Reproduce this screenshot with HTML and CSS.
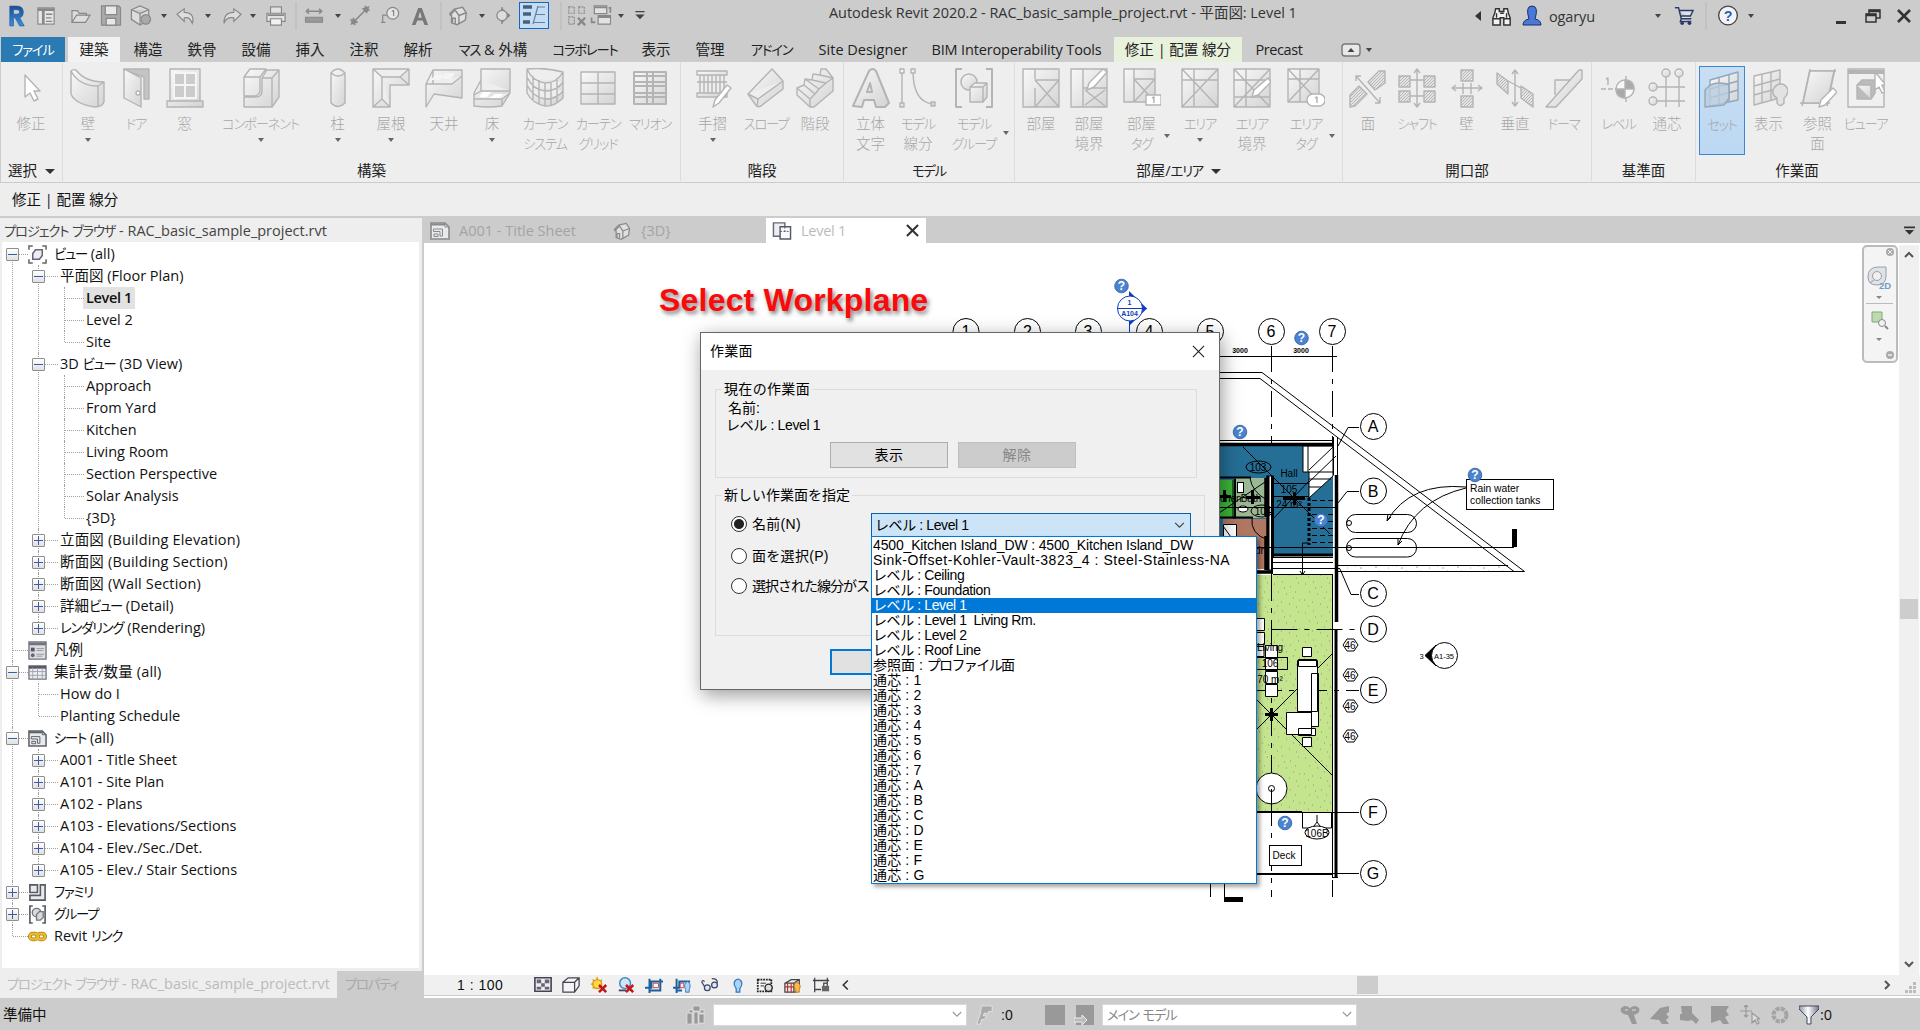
FILE: index.html
```
<!DOCTYPE html>
<html lang="ja">
<head>
<meta charset="utf-8">
<title>Autodesk Revit 2020.2 - RAC_basic_sample_project.rvt</title>
<link rel="stylesheet" href="styles.css">
</head>
<body>
<svg class="defs" aria-hidden="true">
  <defs>
    <linearGradient id="lg" x1="0" y1="0" x2="1" y2="1"><stop offset="0" stop-color="#f8f8f8"/><stop offset="1" stop-color="#d4d4d4"/></linearGradient>
    <linearGradient id="rb" x1="0" y1="0" x2="0" y2="1"><stop offset="0" stop-color="#1b4e8f"/><stop offset="1" stop-color="#3c8fe0"/></linearGradient>
    <linearGradient id="fn" x1="0" y1="0" x2="1" y2="0"><stop offset="0" stop-color="#8a93a5"/><stop offset=".45" stop-color="#fff"/><stop offset="1" stop-color="#6b7488"/></linearGradient>
    <pattern id="grass" width="31" height="29" patternUnits="userSpaceOnUse"><rect width="31" height="29" fill="#c5e48e"/><path d="M3 4h1M11 2h1M19 7h1M27 3h1M7 12h1M15 14h1M24 12h1M2 20h1M10 22h1M18 24h1M28 20h1M22 18h1M13 8h1M6 26h1M25 27h1" stroke="#8a9a80"/></pattern>
    <pattern id="gravel" width="41" height="6" patternUnits="userSpaceOnUse"><path d="M2 2h1M7 4h2M12 1h1M22 3h2M26 1h1M35 4h1" stroke="#aaa"/></pattern>
    <pattern id="hatch" width="3" height="3" patternUnits="userSpaceOnUse"><rect width="3" height="3" fill="#e4e4e4"/><path d="M0 3L3 0" stroke="#aaa" stroke-width=".8"/></pattern>
    <symbol id="help" viewBox="-8 -8 16 16"><circle r="6.8" fill="#4a83cf" stroke="#2c5c9e" stroke-width=".8"/><text y="4.4" text-anchor="middle" font-family="Liberation Sans" font-weight="bold" font-size="12" fill="#fff">?</text></symbol>
    <symbol id="house" viewBox="0 0 24 24"><path d="M3 10l5-5 9-2 4 6-1 8-9 5-6-2V12z" fill="#e0e0e0" stroke="currentColor" stroke-width="1.5"/><path d="M3 12l6-6 4 6v9M13 12l8-3M6 20v-5h3v6" fill="none" stroke="currentColor" stroke-width="1.5"/></symbol>
    <symbol id="sheet" viewBox="0 0 20 18"><path d="M1 1h14l4 4v12H1z" fill="#e8eaee" stroke="currentColor" stroke-width="1.6"/><path d="M1 2.5h14" stroke="currentColor" stroke-width="2"/><path d="M3.500 7h9v7h-2.500V9.500h-6.500zM4 12h4v2.500H4z" fill="none" stroke="currentColor"/><path d="M15 1v4h4" fill="none" stroke="currentColor"/></symbol>
  </defs>
</svg>
<div class="app">

<header class="titlebar">
  <div class="qat">
    <svg viewBox="0 0 20 26" width="18" height="24"><path d="M2 2h8q7 0 7 7 0 5-4 6l5 9h-5l-5-9H6v9H2zM6 6v5h4q3 0 3-2.500T10 6z" fill="url(#rb)" stroke="#1d5fa8" stroke-width=".8"/></svg>
    <svg viewBox="0 0 20 20" width="18" height="18" class="g"><rect x="1" y="1" width="18" height="18" fill="#e6e6e6"/><path d="M1 3h18M7 4v15" stroke-width="3"/><path d="M10 8h7M10 12h6M10 16h7" stroke-width="1.500"/></svg>
    <svg viewBox="0 0 24 20" width="22" height="18" class="g"><path d="M2 17V4h6l2 3h8v3M2 17l5-8h15l-5 8z" fill="#ddd"/></svg>
    <svg viewBox="0 0 22 22" width="21" height="21" class="g"><path d="M1 1h18l2 2v18H1z" fill="#aaa"/><path d="M5 1h12v9H5zM6 14h10v7H6z" fill="#e8e8e8"/></svg>
    <svg viewBox="0 0 24 24" width="23" height="23" class="g"><path d="M2 6l9-4 9 4v10l-9 6-9-6zM2 6l9 4 9-4M11 10v12" fill="#ddd"/><circle cx="17" cy="16" r="5" fill="#aaa"/></svg>
    <i class="dd"></i>
    <svg viewBox="0 0 22 20" width="21" height="18" class="g"><path d="M1 8l8-6v4c9 0 11 6 9 12-2-5-4-7-9-6v4z" fill="#ddd"/></svg>
    <i class="dd"></i>
    <svg viewBox="0 0 22 20" width="21" height="18" class="g"><path d="M21 8l-8-6v4c-9 0-11 6-11 12 2-5 5-7 11-6v4z" fill="#ddd"/></svg>
    <i class="dd"></i>
    <svg viewBox="0 0 22 22" width="21" height="20" class="g"><path d="M5 8V1h12v7M1 8h20v9H1z" fill="#e2e2e2"/><path d="M5 14h12v7H5z" fill="#f2f2f2"/><path d="M2 10h18" stroke-width="2"/></svg>
    <i class="vl"></i>
    <svg viewBox="0 0 22 20" width="21" height="17" class="g"><path d="M2 5h18M5 2L2 5l3 3M17 2l3 3-3 3" stroke-width="1.800"/><path d="M1 12h20v6H1z" fill="#999"/></svg>
    <i class="dd"></i>
    <svg viewBox="0 0 22 22" width="21" height="21" class="g"><path d="M5 17L17 5" stroke-width="1.600"/><path d="M2 20l2-6 4 4zM20 2l-6 2 4 4z" fill="#888"/><path d="M1 15l5 6M16 1l5 5" stroke-width="1.600"/></svg>
    <svg viewBox="0 0 22 22" width="20" height="20" class="g"><circle cx="14" cy="8" r="6.500" fill="#e6e6e6"/><path d="M7.500 10H3v8M1 18h5M13 6l2-1v6"/></svg>
    <svg viewBox="0 0 20 22" width="18" height="20"><path d="M8 2h4l7 19h-4l-2-5H7l-2 5H1zM10 6l-2 7h4z" fill="#777"/></svg>
    <i class="vl"></i>
    <svg width="22" height="23" class="g"><use href="#house"/></svg>
    <i class="dd"></i>
    <svg viewBox="0 0 18 22" width="17" height="21" class="g"><path d="M8 2v18"/><path d="M8 4l8 7-8 7z" fill="#777"/><circle cx="8" cy="11" r="5.500" fill="#ddd"/></svg>
    <div class="thin"><svg viewBox="0 0 22 22" width="22" height="22"><path d="M0 3h9M0 10h8M0 18h7" stroke="#46617e" stroke-width="3.500"/><path d="M10 20L15 2M15 3h7M13 10.500h9M11 18.500h11" stroke="#63809e" stroke-width="1.200" fill="none"/></svg></div>
    <i class="vl"></i>
    <svg viewBox="0 0 22 24" width="20" height="24" class="g"><path d="M2 2h6v7H2zM13 2h6v7h-6zM2 13h6v8H2z" stroke-dasharray="2 1"/><path d="M12 14l8 8M20 14l-8 8" stroke-width="2.500"/></svg>
    <svg viewBox="0 0 22 24" width="21" height="23" class="g"><path d="M4 2h13v8H4zM8 12h13v9H8z" fill="#e2e2e2"/><path d="M4 3.500h13M8 13.500h13M1 14v5h4M21 9V4h-2" stroke-width="2"/></svg>
    <i class="dd"></i>
    <svg viewBox="0 0 12 12" width="11" height="11"><path d="M1 1h10v1.500H1zM1 5h10l-5 5z" fill="#444"/></svg>
  </div>
  <div class="apptitle">Autodesk Revit 2020.2 - RAC_basic_sample_project.rvt - 平面図: Level 1</div>
  <div class="info">
    <svg viewBox="0 0 6 10" width="6" height="10"><path d="M6 0v10L0 5z" fill="#333"/></svg>
    <svg viewBox="0 0 22 22" width="21" height="20"><path d="M4 3h4v3h5V3h4l1 5 2 5v8h-7v-8H9v8H1v-8l2-5z" fill="#f2f2f2" stroke="#333" stroke-width="1.600"/><path d="M1 14h8M13 14h7M9 8h4M5 8v5M16 8v5" stroke="#333" stroke-width="1.500"/></svg>
    <svg viewBox="0 0 20 22" width="21" height="22"><path d="M1 20q0-5 6-6-4-13 3-13t3 13q6 1 6 6z" fill="#4878d8" stroke="#1d2f66"/></svg>
    <span class="user">ogaryu</span>
    <i class="dd"></i>
    <svg viewBox="0 0 22 22" width="20" height="20"><path d="M1 2h4l3 12h11M6 5h15l-3 6H8M8 14l-1 3h12" fill="#dfe3ea" stroke="#2c3a66" stroke-width="1.600"/><circle cx="9" cy="19" r="2" fill="#2c3a66"/><circle cx="17" cy="19" r="2" fill="#2c3a66"/></svg>
    <i class="vl"></i>
    <svg viewBox="0 0 22 22" width="21" height="21"><circle cx="11" cy="11" r="9.800" fill="#f4f4f4" stroke="#444" stroke-width="1.400"/><text x="11" y="16.500" text-anchor="middle" font-family="Liberation Sans" font-size="15" font-weight="bold" fill="#2a62b8">?</text></svg>
    <i class="dd"></i>
    <svg viewBox="0 0 10 16" width="10" height="16"><path d="M0 13h10v3H0z" fill="#333"/></svg>
    <svg viewBox="0 0 16 14" width="16" height="14"><path d="M4 5V1h11v8h-4M1 5h10v8H1z" fill="none" stroke="#333" stroke-width="1.500"/><path d="M1 6h10M4 2h11" stroke="#333" stroke-width="2.500"/></svg>
    <svg viewBox="0 0 14 14" width="14" height="14"><path d="M1 1l12 12M13 1L1 13" stroke="#333" stroke-width="2.600"/></svg>
  </div>
</header>

<nav class="tabs">
  <span class="t-file"><b class="k">ファイル</b></span><span class="t-on">建築</span><span>構造</span><span>鉄骨</span><span>設備</span><span>挿入</span><span>注釈</span><span>解析</span><span class="t-mass"><b class="k">マス</b> &amp; 外構</span><span class="t-col"><b class="k">コラボレート</b></span><span>表示</span><span>管理</span><span class="t-add"><b class="k">アドイン</b></span><span class="t-site">Site Designer</span><span class="t-bim">BIM Interoperability Tools</span><span class="t-mod">修正 | 配置 線分</span><span class="t-pre">Precast</span>
  <svg viewBox="0 0 20 14" width="20" height="14"><rect x="1" y="1" width="18" height="12" rx="3" fill="#e8e8e8" stroke="#777" stroke-width="1.400"/><path d="M6.500 9h7L10 5z" fill="#444"/></svg>
  <i class="dd"></i>
</nav>

<section class="ribbon">
  <div class="panel p-sel">
    <div class="tools">
      <div class="tool"><svg viewBox="0 0 38 40"><path d="M13 7v22l5-4 4 8 4-2-4-8h6z" fill="#fff"/></svg><span>修正</span></div>
    </div>
    <div class="plabel">選択 <i class="pd"></i></div>
  </div>
  <div class="panel p-build">
    <div class="tools">
      <div class="tool"><svg viewBox="0 0 38 40"><path d="M2 3q2-2 5-1 9 12 28 12v20q-2 5-9 5Q6 36 2 26zM2 3q8 15 27 15v20M29 18l6-4"/></svg><span>壁</span><i class="dd"></i></div>
      <div class="tool"><svg viewBox="0 0 38 40"><path d="M7 1h25v30h-5V9L7 2z" fill="#c4c4c4"/><path d="M7 1l17 9v29L7 30z"/><circle cx="21" cy="25" r="2" fill="#fff"/></svg><span><b class="k">ドア</b></span></div>
      <div class="tool"><svg viewBox="0 0 38 40"><path d="M4 1h30v32H4zM1 33h36v6H1z"/><path d="M8 5h22v25H8zM19 5v25M8 17h22" fill="#ccc" stroke="#f5f5f5" stroke-width="2"/></svg><span>窓</span></div>
      <div class="tool"><svg viewBox="0 0 38 40"><path d="M2 9l6-8h16l-6 8v15q-2 4-6 4H2zM2 9h16M20 10l5-8h12v27l-7 10H2V29h12q6 0 6-6zM20 10h10v29M30 10l7-8"/></svg><span><b class="k">コンポーネント</b></span><i class="dd"></i></div>
      <div class="tool"><svg viewBox="0 0 38 40"><path d="M12 5q7-8 14 0v30q-7 7-14 0zM12 5q7 6 14 0"/></svg><span>柱</span><i class="dd"></i></div>
      <div class="tool"><svg viewBox="0 0 38 40"><path d="M1 1h36v16H18v22H1zM1 1l9 8h18l9-8M10 9v22l8 8M10 31l-9 8M28 9l9 8"/></svg><span>屋根</span><i class="dd"></i></div>
      <div class="tool"><svg viewBox="0 0 38 40"><path d="M1 16L8 2h29v28L9 26l-8 13zM1 16h26L37 8M8 2v14"/><path d="M10 7h9l-4 5H6zM21 5h9l-4 6h-9z" fill="#f5f5f5" stroke="none"/></svg><span>天井</span></div>
      <div class="tool"><svg viewBox="0 0 38 40"><path d="M1 25L8 12V1h29v24l-8 13q-13 2-28 0zM8 12v11h29M1 27l7-4M1 31h28l8-6M29 31v7"/><path d="M10 24h8l-4 5H6zM22 26h8l-4 4h-9z" fill="#fff" stroke="none"/></svg><span>床</span><i class="dd"></i></div>
      <div class="tool"><svg viewBox="0 0 38 40"><path d="M1 1q18-2 36 3v26q-9 9-18 8Q7 36 1 25zM1 1q5 12 18 14 12 0 18-11M7 8v25M13 12v25M19 15v23M25 14v23M31 10v24M1 9q6 13 18 14 12 0 18-9M1 17q6 12 18 14 12 0 18-8"/></svg><span><b class="k">カーテン<br>システム</b></span></div>
      <div class="tool"><svg viewBox="0 0 38 40"><path d="M2 4h34v32H2zM19 4v32M2 15h34M2 26h34"/></svg><span><b class="k">カーテン<br>グリッド</b></span></div>
      <div class="tool"><svg viewBox="0 0 38 40"><path d="M3 4h32v32H3zM3 8h32M3 14h32M3 18h32M3 25h32M3 29h32M16 4h6v32h-6z" stroke-width="2"/></svg><span><b class="k">マリオン</b></span></div>
    </div>
    <div class="plabel">構築</div>
  </div>
  <div class="panel p-stair">
    <div class="tools">
      <div class="tool"><svg viewBox="0 0 38 40"><path d="M3 3h30v4H3zM3 14h30M3 25h30v4H3zM6 7v18M10 7v18M14 7v18M18 7v18M22 7v18M26 7v18M30 7v18"/><path d="M19 39l2-7 12-15 4 3-12 15z" fill="#fff"/></svg><span>手摺</span><i class="dd"></i></div>
      <div class="tool"><svg viewBox="0 0 38 40"><path d="M1 26L25 1l11 12v8L14 38q-4 2-6-2zM1 26l10 5 25-18M11 31l-1 8"/></svg><span><b class="k">スロープ</b></span></div>
      <div class="tool"><svg viewBox="0 0 38 40"><path d="M1 20l7-3 1-6 7 1 1-6 7 1 1-6h5l7 9v13L18 39h-4L1 27zM1 20l13 11v8M8 17l11 9-5 5M9 11l14 10-4 5M16 12l14 3-7 6M24 7l13 3-7 5"/></svg><span>階段</span></div>
    </div>
    <div class="plabel">階段</div>
  </div>
  <div class="panel p-model">
    <div class="tools">
      <div class="tool"><svg viewBox="0 0 38 40"><path d="M1 38L17 3q4-4 7 0l13 32-4 4h-9l-2-7H12l-2 7zM15 24h5l-2-9z" stroke-width="2"/></svg><span>立体<br>文字</span></div>
      <div class="tool"><svg viewBox="0 0 38 40"><path d="M3 3v33M14 3q0 30 19 33" fill="none"/><path d="M1 1h4v4H1zM1 35h4v4H1zM12 1h4v4h-4zM32 34h4v4h-4z"/></svg><span><b class="k">モデル</b><br>線分</span></div>
      <div class="tool"><svg viewBox="0 0 38 40"><path d="M7 1H1v38h6M31 1h6v38h-6" fill="none" stroke-width="2"/><circle cx="14" cy="14" r="8"/><path d="M15 19l5-4h12v14l-4 5H15zM15 19h13v15M28 19l4-4"/></svg><span><b class="k">モデル<br>グループ</b></span><i class="dd side"></i></div>
    </div>
    <div class="plabel"><b class="k">モデル</b></div>
  </div>
  <div class="panel p-room">
    <div class="tools">
      <div class="tool"><svg viewBox="0 0 38 40"><path d="M1 1h36v38H1zM13 1v10M13 20v19M13 12h24v27M13 12l24 27M37 12L13 39"/></svg><span>部屋</span></div>
      <div class="tool"><svg viewBox="0 0 38 40"><path d="M1 1h36v38H1zM13 1v38M13 20h24M15 37l20-15M15 22l20 16"/><path d="M17 22l2-7L33 1l4 3-13 15z" fill="#fff"/></svg><span>部屋<br>境界</span></div>
      <div class="tool"><svg viewBox="0 0 38 40"><path d="M1 1h31v33H1zM11 1v33M11 11h21M11 11l21 23M32 11L11 34"/><path d="M23 27h15v10H23z" fill="#fff"/><path d="M29 30l2-1v6"/></svg><span>部屋<br><b class="k">タグ</b></span><i class="dd side"></i></div>
      <div class="tool"><svg viewBox="0 0 38 40"><path d="M1 1h36v38H1zM13 1v38M1 12h36M1 1l36 38M37 1L1 39"/></svg><span><b class="k">エリア</b></span><i class="dd"></i></div>
      <div class="tool"><svg viewBox="0 0 38 40"><path d="M1 1h36v38H1zM13 1v38M1 12h36M1 29h36M1 1l36 38M37 1L1 39"/><path d="M19 29l2-7 14-12 3 4-13 13z" fill="#fff"/></svg><span><b class="k">エリア</b><br>境界</span></div>
      <div class="tool"><svg viewBox="0 0 38 40"><path d="M1 1h31v33H1zM13 1v33M1 11h31M1 1l31 33M32 1L1 34"/><rect x="20" y="26" width="18" height="12" rx="6" fill="#fff"/><path d="M28 30l2-1v6"/></svg><span><b class="k">エリア<br>タグ</b></span><i class="dd side"></i></div>
    </div>
    <div class="plabel">部屋/<b class="k">エリア</b> <i class="pd"></i></div>
  </div>
  <div class="panel p-open">
    <div class="tools">
      <div class="tool"><svg viewBox="0 0 38 40"><path d="M19 14L30 3h6v12L26 22zM1 39V27l9-9 8 8-12 12z" fill="url(#hatch)"/><path d="M7 8l24 27M7 13V8h5M31 29v6h-5" fill="none"/></svg><span>面</span></div>
      <div class="tool"><svg viewBox="0 0 38 40"><path d="M1 8h11v11H1zM26 8h11v11H26zM1 23h11v11H1zM26 23h11v11H26z" fill="url(#hatch)"/><path d="M19 2v37M16 5l3-4 3 4M16 35l3 4 3-4M12 12h14M12 28h14" fill="none"/></svg><span><b class="k">シャフト</b></span></div>
      <div class="tool"><svg viewBox="0 0 38 40"><path d="M13 2h12v11H13zM13 28h12v11H13z" fill="url(#hatch)"/><path d="M5 20h28M8 17l-4 3 4 3M30 17l4 3-4 3M15 15v11M23 15v11" fill="none"/></svg><span>壁</span></div>
      <div class="tool"><svg viewBox="0 0 38 40"><path d="M1 5l11 8v13L1 16zM25 18l12 8v13l-12-9z" fill="url(#hatch)"/><path d="M19 3v35M16 6l3-4 3 4M16 34l3 4 3-4M12 13l13 7" fill="none"/></svg><span>垂直</span></div>
      <div class="tool"><svg viewBox="0 0 38 40"><path d="M1 39L34 2h3v9L11 39zM10 27V12h16"/></svg><span><b class="k">ドーマ</b></span></div>
    </div>
    <div class="plabel">開口部</div>
  </div>
  <div class="panel p-datum">
    <div class="tools">
      <div class="tool"><svg viewBox="0 0 38 40"><path d="M1 21h34M26 8v27" stroke-dasharray="5 2"/><circle cx="25" cy="21" r="9" fill="#f8f8f8"/><path d="M25 12v9h9q0-9-9-9zM25 30v-9h-9q0 9 9 9z" fill="#aaa"/><path d="M6 11l2-1v7"/></svg><span><b class="k">レベル</b></span></div>
      <div class="tool"><svg viewBox="0 0 38 40"><path d="M18 9v30M31 9v30M8 19h29M8 33h29" fill="none"/><circle cx="18" cy="5" r="4"/><circle cx="31" cy="5" r="4"/><circle cx="5" cy="19" r="4"/><circle cx="5" cy="33" r="4"/></svg><span>通芯</span></div>
    </div>
    <div class="plabel">基準面</div>
  </div>
  <div class="panel p-work">
    <div class="tools">
      <div class="tool on"><svg viewBox="0 0 38 40"><path d="M7 11l28-8v28L7 37zM7 20l28-8M7 29l28-8M16 8v27M26 6v27"/><path d="M2 21l5-5q10-4 19 0v13l-5 7-19 2z" fill="#b9cde0" fill-opacity=".8"/></svg><span><b class="k">セット</b></span></div>
      <div class="tool"><svg viewBox="0 0 38 40"><path d="M4 8l26-6v28L4 37zM4 18l26-7M4 27l26-7M12 6v28M21 4v28"/><path d="M27 35v-5q-5-3-4-8 3-6 8-6t7 6q0 5-4 8v5q-4 5-7 0z" fill="#e2e2e2"/></svg><span>表示</span></div>
      <div class="tool"><svg viewBox="0 0 38 40"><path d="M10 3h27M1 35h30M11 1L3 38M36 1L28 38"/><path d="M11 3h24l-7 32H4z"/><path d="M20 39l2-7 12-12 4 4-12 13z" fill="#fff"/></svg><span>参照<br>面</span></div>
      <div class="tool"><svg viewBox="0 0 38 40"><path d="M1 1h36v38H1z" fill="#f0f0f0"/><path d="M1 4h36" stroke-width="4"/><path d="M10 17l5-5h13v13l-4 6H10z" fill="#bbb"/><path d="M10 17h14v14"/><path d="M28 4v18l4-3 3 6 3-1-3-7h4z" fill="#fff"/></svg><span><b class="k">ビューア</b></span></div>
    </div>
    <div class="plabel">作業面</div>
  </div>
</section>

<div class="options">修正 | 配置 線分</div>

<main class="work">
  <aside class="browser">
    <div class="bhead"><b class="k">プロジェクト</b> <b class="k">ブラウザ</b> - RAC_basic_sample_project.rvt</div>
    <div class="bbody">
      <ul class="tree">
        <li><div class="row ic"><i class="tw"></i><svg viewBox="0 0 20 20"><path d="M1 5V1h4M15 1h4v4M19 15v4h-4M5 19H1v-4" fill="none" stroke="#666" stroke-width="1.600"/><path d="M5 9l3-4h7v6l-3 4H5z" fill="#eceef4" stroke="#667" stroke-width="1.600"/></svg><span><b class="k">ビュー</b> (all)</span></div>
          <ul>
            <li><div class="row"><i class="tw"></i><span>平面図 (Floor Plan)</span></div>
              <ul>
                <li><div class="row"><span class="sel">Level 1</span></div></li>
                <li><div class="row"><span>Level 2</span></div></li>
                <li><div class="row"><span>Site</span></div></li>
              </ul></li>
            <li><div class="row"><i class="tw"></i><span>3D <b class="k">ビュー</b> (3D View)</span></div>
              <ul>
                <li><div class="row"><span>Approach</span></div></li>
                <li><div class="row"><span>From Yard</span></div></li>
                <li><div class="row"><span>Kitchen</span></div></li>
                <li><div class="row"><span>Living Room</span></div></li>
                <li><div class="row"><span>Section Perspective</span></div></li>
                <li><div class="row"><span>Solar Analysis</span></div></li>
                <li><div class="row"><span>{3D}</span></div></li>
              </ul></li>
            <li><div class="row wide"><i class="tw plus"></i><span>立面図 (Building Elevation)</span></div></li>
            <li><div class="row wide"><i class="tw plus"></i><span>断面図 (Building Section)</span></div></li>
            <li><div class="row wide"><i class="tw plus"></i><span>断面図 (Wall Section)</span></div></li>
            <li><div class="row"><i class="tw plus"></i><span>詳細<b class="k">ビュー</b> (Detail)</span></div></li>
            <li><div class="row"><i class="tw plus"></i><span><b class="k">レンダリング</b> (Rendering)</span></div></li>
          </ul></li>
        <li><div class="row ic"><svg viewBox="0 0 20 20"><path d="M1 1h18v18H1z" fill="#dcdee4" stroke="#70747c" stroke-width="1.400"/><path d="M1 3h18" stroke="#70747c" stroke-width="3"/><path d="M3 7h4v4H3z" fill="#556"/><circle cx="5" cy="15" r="2" fill="#667"/><path d="M9 8h8M9 10h7M9 14h8M9 16h6" stroke="#999"/></svg><span>凡例</span></div></li>
        <li><div class="row ic wide"><i class="tw"></i><svg viewBox="0 0 20 20"><path d="M1 3h18v14H1z" fill="#eceef2" stroke="#70747c" stroke-width="1.400"/><path d="M1 4.500h18" stroke="#555a66" stroke-width="3"/><path d="M1 9h18M1 13h18M5 5v12M10 5v12M15 5v12" stroke="#a0a4ac"/></svg><span>集計表/数量 (all)</span></div>
          <ul>
            <li><div class="row"><span>How do I</span></div></li>
            <li><div class="row"><span>Planting Schedule</span></div></li>
          </ul></li>
        <li><div class="row ic"><i class="tw"></i><svg class="dk"><use href="#sheet"/></svg><span><b class="k">シート</b> (all)</span></div>
          <ul>
            <li><div class="row"><i class="tw plus"></i><span>A001 - Title Sheet</span></div></li>
            <li><div class="row"><i class="tw plus"></i><span>A101 - Site Plan</span></div></li>
            <li><div class="row"><i class="tw plus"></i><span>A102 - Plans</span></div></li>
            <li><div class="row"><i class="tw plus"></i><span>A103 - Elevations/Sections</span></div></li>
            <li><div class="row"><i class="tw plus"></i><span>A104 - Elev./Sec./Det.</span></div></li>
            <li><div class="row"><i class="tw plus"></i><span>A105 - Elev./ Stair Sections</span></div></li>
          </ul></li>
        <li><div class="row ic"><i class="tw plus"></i><svg viewBox="0 0 20 20"><path d="M2 2h8v8H2zM13 2h5v16H2v-5h11z" fill="#e8eaee" stroke="#565a62" stroke-width="1.700"/></svg><span><b class="k">ファミリ</b></span></div></li>
        <li><div class="row ic"><i class="tw plus"></i><svg viewBox="0 0 20 20"><path d="M5 1H2v18h3M15 1h3v18h-3" fill="none" stroke="#565a62" stroke-width="1.700"/><circle cx="9" cy="8" r="4.500" fill="#d5d9e0" stroke="#777" stroke-width="1.400"/><path d="M9 10l3-3h4v6l-3 3H9z" fill="#d5d9e0" stroke="#777" stroke-width="1.400"/></svg><span><b class="k">グループ</b></span></div></li>
        <li><div class="row ic"><svg viewBox="0 0 20 20"><g fill="none" stroke="#a87f10" stroke-width="4"><rect x="2" y="7" width="8" height="6" rx="3"/><rect x="10" y="7" width="8" height="6" rx="3"/></g><g fill="none" stroke="#eebb2a" stroke-width="2.200"><rect x="2" y="7" width="8" height="6" rx="3"/><rect x="10" y="7" width="8" height="6" rx="3"/></g></svg><span>Revit <b class="k">リンク</b></span></div></li>
      </ul>
    </div>
    <div class="btabs"><span class="b-on"><b class="k">プロジェクト</b> <b class="k">ブラウザ</b> - RAC_basic_sample_project.rvt</span><span class="b-off"><b class="k">プロパティ</b></span></div>
  </aside>

  <section class="view">
    <div class="vtabs">
      <div class="vt v1"><svg class="md" width="20" height="18"><use href="#sheet"/></svg>A001 - Title Sheet</div>
      <div class="vt v2"><svg class="md" width="20" height="20"><use href="#house"/></svg>{3D}</div>
      <div class="vt v3"><svg viewBox="0 0 20 20" width="20" height="19"><path d="M1 2h12v14H1z" fill="#eceef4" stroke="#666a75" stroke-width="1.500"/><path d="M8 6h11v13H8z" fill="#fafafc" stroke="#555a66" stroke-width="1.500"/><path d="M8 11h11M13 6v6" stroke="#555a66" stroke-dasharray="2 1.500"/></svg>Level 1<svg class="vx" viewBox="0 0 14 14" width="13" height="13"><path d="M1 1l12 12M13 1L1 13" stroke="#333" stroke-width="2.200"/></svg></div>
      <svg class="vmenu" viewBox="0 0 12 10" width="11" height="10"><path d="M0 0h12v2H0zM1 4h10l-5 5z" fill="#333"/></svg>
    </div>
    <div class="vmid">
      <div class="canvas">
        <svg class="plan" viewBox="424 243 1475 732" width="1475" height="732">
          <g class="ln">
            <g class="dash"><path d="M1271.500 346V575M1332.500 346V445M1271.500 575V897M1271.500 629.500H1359M1256 690.500H1359"/></g>
            <path d="M1129.500 320V335M1219 356.500H1337M1219 372.500H1262L1524.500 571.500H1337M1219 378.500H1260L1514 571.500M1337 565.500H1508"/>
            <rect x="1340" y="566" width="168" height="5" fill="url(#gravel)" stroke="none"/>
            <path d="M1219 440.500H1333M1333.500 437V475M1337.500 437V475M1359 427.500H1348L1338 446M1359 491.500H1347L1338 503M1359 594.500H1351L1340 569M1330 812.500H1359M1333 873.500H1359"/>
            <rect x="1219" y="446" width="114" height="108" fill="#256f96" stroke="none"/>
            <path d="M1303 446H1333V476L1309 498V472H1303z" fill="#fff"/>
            <path d="M1308 446V472M1309 472H1333M1309 479H1331M1309 487H1321M1309 470L1333 447M1309 482L1336 456"/>
            <path d="M1309 498V545" stroke-width="3" stroke-dasharray="3 2"/>
            <path d="M1312 500.500H1333M1312 507.500H1333M1312 514.500H1333M1312 521.500H1333M1312 528.500H1333M1312 535.500H1333M1312 542.500H1333" stroke-dasharray="5 3"/>
            <rect x="1219" y="480" width="15" height="37" fill="#3cb53a" stroke="none"/>
            <rect x="1236" y="478" width="32" height="40" fill="#9ab894" stroke="none"/>
            <rect x="1223" y="519" width="45" height="50" fill="#b07763" stroke="none"/>
            <path d="M1223.500 524.500h13v20h-13z" fill="#fff"/><path d="M1223 526l13 18M1252 518q-2 16 16 22M1250 478q2 14 17 22M1236 518l-3 0v-38"/>
            <rect x="1237.500" y="482.500" width="6" height="10" fill="#fff"/><ellipse cx="1243" cy="509" rx="5" ry="3" fill="#fff"/>
            <path d="M1219 444.500H1333" stroke-width="3.500"/><path d="M1219 477.500H1251M1235 479v39M1219 517.500h34" stroke-width="2"/>
            <rect x="1267" y="476" width="6" height="94" fill="#fff"/><path d="M1268 476V570M1272.500 476V574M1273 555H1333" stroke-width="3"/><path d="M1336.500 475V622M1220 572H1272M1266 478v38M1266 536v34" stroke-width="3.500"/>
            <rect x="1273" y="557" width="60" height="17" fill="#fff" stroke="none"/><path d="M1273 557.500H1333M1273 562.500H1333M1273 568.500H1340M1273 574.500H1333M1302.500 574V543H1309M1300 571l2.500 4 2.500-4"/>
            <path d="M1219 507.500H1337M1219 547.500H1514M1273 483.500H1309M1273 496.500H1309M1243 447L1330 534M1273 519L1309 481M1219 513L1268 480"/>
            <rect x="1256" y="575" width="76" height="237" fill="url(#grass)" stroke="none"/>
            <path d="M1332.500 574V878"/><path d="M1336 630V878" stroke-width="3"/><path d="M1332 877.500h6"/>
            <g class="dash"><path d="M1271.500 575V880M1271.500 629.500H1333M1256 690.500H1333"/></g>
            <path d="M1332 654L1256 730M1256 699L1332 775"/>
            <path d="M1256 618.500h8.500v12H1256M1256 632.500h8.500v12H1256M1256 646.500h8v10h-8M1265.500 645.500h12v12h-12zM1265.500 658.500h12v12h-12zM1265.500 671.500h12v12h-12zM1265.500 684.500h12v12h-12z" fill="#fff"/>
            <rect x="1256" y="657.500" width="31.500" height="12" fill="none"/>
            <path d="M1302.500 647.500h9v9h-9zM1297.500 660.500h20v51h-20zM1298.500 659.500h18v7h-18zM1286.500 712.500h25v22h-25zM1311.500 673.500h7v53h-7zM1298.500 728.500h17v7h-17zM1302.500 737.500h9v9h-9z" fill="#fff"/>
            <circle cx="1271.500" cy="788.500" r="15.500" fill="#fff"/><circle cx="1271.500" cy="788.500" r="3"/><path d="M1271.500 789V820"/>
            <path d="M1265 714.500h13M1271.500 708v13M1283 498.500h22M1294.500 493v12M1217 496.500h14M1224.500 490v12M1246 497.500h14M1252.500 490v14" stroke-width="3"/>
            <path d="M1256 812H1302M1256 874H1333" stroke-width="2"/><path d="M1302 812.500h30M1302.500 813v15h8M1331.500 813v15h-8M1317 815v7l-6 8M1317 822l6 8"/>
            <ellipse cx="1317" cy="832.500" rx="12" ry="6.500" fill="#fff"/><rect x="1269.500" y="845.500" width="32" height="20" fill="#fff"/>
            <path d="M1332.500 880V897M1210.500 882V897M1224.500 882V898"/><rect x="1224" y="897" width="19" height="5" fill="#000" stroke="none"/>
            <ellipse cx="1258.500" cy="467" rx="12.500" ry="6"/><ellipse cx="1262" cy="511" rx="11" ry="6"/>
            <rect x="1346.500" y="514.500" width="70" height="18" rx="9"/><rect x="1346.500" y="538.500" width="70" height="18.500" rx="9"/><circle cx="1349" cy="523" r="2.500"/><circle cx="1349" cy="548" r="2.500"/>
            <path d="M1466 487Q1410 482 1387 521l4-4M1387 521l1-7M1466 488Q1415 500 1398 545l4-4M1398 545l0-7"/>
            <rect x="1512" y="529" width="5" height="18" fill="#000" stroke="none"/><rect x="1466.500" y="479.500" width="87" height="30" fill="#fff"/>
            <path d="M1425 655.500L1436 645v21z" fill="#000"/><circle cx="1444.500" cy="655.500" r="13" fill="#fff"/>
            <path d="M1343 645l4-6h7l4 6-4 6h-7zM1343 675l4-6h7l4 6-4 6h-7zM1343 706l4-6h7l4 6-4 6h-7zM1343 736l4-6h7l4 6-4 6h-7z"/>
            <g fill="#fff"><circle cx="966" cy="331.500" r="13"/><circle cx="1027.500" cy="331.500" r="13"/><circle cx="1088.500" cy="331.500" r="13"/><circle cx="1149.500" cy="331.500" r="13"/><circle cx="1210.500" cy="331.500" r="13"/><circle cx="1271.500" cy="331.500" r="13"/><circle cx="1332.500" cy="331.500" r="13"/>
            <circle cx="1373.500" cy="426.500" r="13"/><circle cx="1373.500" cy="491" r="13"/><circle cx="1373.500" cy="593.500" r="13"/><circle cx="1373.500" cy="629" r="13"/><circle cx="1373.500" cy="690" r="13"/><circle cx="1373.500" cy="812" r="13"/><circle cx="1373.500" cy="873.500" r="13"/></g>
          </g>
          <path d="M1129 291L1147 308.500 1129 326z" fill="#0f3cc0"/><circle cx="1130" cy="308.500" r="12.500" fill="#fff" stroke="#0f3cc0"/><path d="M1117 308.500H1147M1129.500 321V335" stroke="#0f3cc0"/>
          <g class="blue"><text x="1129.500" y="305">1</text><text x="1129.500" y="316">A104</text></g>
          <g class="bub"><text x="966" y="337">1</text><text x="1027.500" y="337">2</text><text x="1088" y="337">3</text><text x="1149" y="337">4</text><text x="1210" y="337">5</text><text x="1271" y="337">6</text><text x="1332" y="337">7</text><text x="1373" y="432">A</text><text x="1373" y="497">B</text><text x="1373" y="599">C</text><text x="1373" y="635">D</text><text x="1373" y="696">E</text><text x="1373" y="818">F</text><text x="1373" y="879">G</text></g>
          <g class="note"><text x="1470" y="492">Rain water</text><text x="1470" y="503.500">collection tanks</text></g>
          <g class="sm"><text x="1258" y="471">103</text><text x="1289" y="477">Hall</text><text x="1289" y="493">105</text><text x="1289" y="508">24 m²</text><text x="1251" y="502">Bath</text><text x="1263" y="515">104</text><text x="1262" y="554">dry</text><text x="1225" y="502">Kitchen</text><text x="1270" y="651">Living</text><text x="1270" y="667">106</text><text x="1270" y="683">70 m²</text><text x="1350" y="648.500">46</text><text x="1350" y="678.500">46</text><text x="1350" y="709.500">46</text><text x="1350" y="739.500">46</text><text x="1317" y="836.500">106B</text><text x="1284" y="858.500">Deck</text></g>
          <g class="xs"><text class="dim" x="1240" y="353">3000</text><text class="dim" x="1301" y="353">3000</text><text x="1444" y="659">A1-35</text><text x="1421.500" y="658.500">3</text></g>
          <use href="#help" x="1113.500" y="278" width="16" height="16"/><use href="#help" x="1293.500" y="330" width="16" height="16"/><use href="#help" x="1232" y="424" width="16" height="16"/><use href="#help" x="1467" y="467" width="16" height="16"/><use href="#help" x="1313" y="512" width="16" height="16"/><use href="#help" x="1277" y="815" width="16" height="16"/>
        </svg>
        <div class="callout">Select Workplane</div>
        <div class="navbar">
          <svg viewBox="0 0 36 118" width="36" height="118"><circle cx="28" cy="7" r="4" fill="#aaa"/><path d="M26 5l4 4M30 5l-4 4" stroke="#eee"/><path d="M6 32q0-10 10-10h8v9q0 9-9 9t-9-8z" fill="#dfe3e8" stroke="#999ea6"/><circle cx="15" cy="31" r="4.500" fill="#f0f0f0" stroke="#999ea6"/><path d="M8 38l4-3" stroke="#999"/><text x="17" y="44" font-family="Liberation Sans" font-weight="bold" font-size="9.500" fill="#6f9cc8">2D</text><path d="M14 51h6l-3 3zM14 93h6l-3 3z" fill="#888"/><path d="M4 58.500h27" stroke="#bbb"/><path d="M10 67h10v10H10z" fill="#c0d8b0" stroke="#7ab070"/><circle cx="20" cy="78" r="3.500" fill="#eef3f6" stroke="#888"/><path d="M23 81l3 3" stroke="#888" stroke-width="2"/><circle cx="28" cy="110" r="4" fill="#aaa"/><path d="M26 110h4" stroke="#eee" stroke-width="1.500"/></svg>
        </div>
      </div>
      <div class="vscroll"><svg viewBox="0 0 10 7" width="10" height="7"><path d="M1 6l4-4 4 4" class="chev"/></svg><i></i><svg viewBox="0 0 10 7" width="10" height="7"><path d="M1 1l4 4 4-4" class="chev"/></svg></div>
    </div>
    <div class="vbar">
      <span class="scale">1 : 100</span>
      <svg viewBox="0 0 20 20"><path d="M1 2h18v15H1z" fill="#eee" stroke="#445" stroke-width="1.800"/><path d="M3 4h5v4H3zM12 4h5v4h-5zM8 8h4v4H8zM3 12h5v3H3zM12 12h5v3h-5z" fill="#667"/></svg>
      <svg viewBox="0 0 20 20"><path d="M1 7l6-5h12v9l-5 7H1zM1 7h13v11M14 7l5-5" fill="#f5f5f5" stroke="#445" stroke-width="1.400"/></svg>
      <svg viewBox="0 0 20 20"><circle cx="8" cy="9" r="5" fill="#ffd84a" stroke="#d89a10" stroke-width="1.500"/><path d="M8 1v3M1 9h3M3 4l2 2M13 4l-1 2M3 14l2-2" stroke="#d89a10" stroke-width="1.500"/><path d="M10 10l8 8M18 10l-8 8" stroke="#c01818" stroke-width="2.800"/></svg>
      <svg viewBox="0 0 20 20"><circle cx="9" cy="8" r="6" fill="#cfe6f8" stroke="#4888c0" stroke-width="1.600"/><path d="M2 16h8" stroke="#445" stroke-width="2"/><path d="M10 10l8 8M18 10l-8 8" stroke="#c01818" stroke-width="2.800"/></svg>
      <svg viewBox="0 0 20 20"><path d="M0 13h7V6h13M5 19V3M5 16h12V3" fill="none" stroke="#1d5fa0" stroke-width="2.200"/><path d="M9 8h6v5H9z" fill="#fff" stroke="#c33"/></svg>
      <svg viewBox="0 0 20 20"><path d="M0 13h7V6h12M4 19V3M5 16h5" fill="none" stroke="#1d5fa0" stroke-width="2.200"/><path d="M8 8h4v5H8z" fill="#fff" stroke="#c33"/><path d="M14 15q-3-6 2-9 5 3 2 9v3h-4z" fill="#a8d4f8" stroke="#3878b8"/></svg>
      <svg viewBox="0 0 20 20"><circle cx="7" cy="13" r="3.200" fill="#d8eaf8" stroke="#446" stroke-width="1.400"/><circle cx="15" cy="10" r="3.200" fill="#d8eaf8" stroke="#446" stroke-width="1.400"/><path d="M4 12L1 7q0-3 3-1M18 8q1-5-6-5" fill="none" stroke="#446" stroke-width="1.400"/></svg>
      <svg viewBox="0 0 20 20"><path d="M8 14q-4-5-1-9 3-3 6 0 3 4-1 9v4H8z" fill="#a8d4f8" stroke="#3878b8" stroke-width="1.400"/></svg>
      <svg viewBox="0 0 20 20"><path d="M2 4h15v13H2z" fill="#f5f5f5" stroke="#222" stroke-width="2" stroke-dasharray="2 1"/><circle cx="14" cy="13" r="4" fill="#ddd" stroke="#222" stroke-width="1.500"/><path d="M5 8h6M5 11h4" stroke="#222"/></svg>
      <svg viewBox="0 0 20 20"><path d="M1 8l7-4h9v9l-4 5H1zM1 8h10v10M11 8l6-4" fill="#eee" stroke="#444" stroke-width="1.400"/><path d="M1 12h10M4 8v10M8 8v10" stroke="#b33" stroke-width="1.300"/><path d="M13 15q-4-5 1-8 6 2 3 8v3h-4z" fill="#ffb84a" stroke="#c07818"/></svg>
      <svg viewBox="0 0 20 20"><path d="M3 2v16M1 5h18M17 2v6M3 15h7" fill="none" stroke="#444" stroke-width="1.400"/><rect x="11" y="11" width="8" height="6" fill="#666"/><path d="M13 11V8h4v3" fill="none" stroke="#555" stroke-width="1.500"/></svg>
      <svg class="hleft" viewBox="0 0 20 20"><path d="M12 5l-5 5 5 5" fill="none" stroke="#333" stroke-width="1.800"/></svg>
      <i class="hthumb"></i>
      <svg class="hright" viewBox="0 0 8 10"><path d="M2 1l4 4-4 4" class="chev"/></svg>
      <svg class="grip" viewBox="0 0 11 11"><path d="M8 0h3v3H8zM4 4h3v3H4zM8 4h3v3H8zM0 8h3v3H0zM4 8h3v3H4zM8 8h3v3H8z" fill="#bbb"/></svg>
    </div>
  </section>

  <div class="dialog">
    <div class="dtitle">作業面<svg viewBox="0 0 14 14" width="13" height="13"><path d="M1 1l12 12M13 1L1 13" stroke="#222" stroke-width="1.200"/></svg></div>
    <fieldset class="f1"><legend>現在の作業面</legend>
      <p>名前:</p><p class="lv">レベル : Level 1</p>
      <div class="btns"><button>表示</button><button disabled>解除</button></div>
    </fieldset>
    <fieldset class="f2"><legend>新しい作業面を指定</legend>
      <div class="rads"><label><i class="rad on"></i>名前(N)</label><label><i class="rad"></i>面を選択(P)</label><label class="third"><i class="rad"></i>選択された線分がス</label></div>
      <div class="combo">レベル : Level 1<svg viewBox="0 0 12 8" width="11" height="7"><path d="M1 1l5 5 5-5" fill="none" stroke="#444" stroke-width="1.300"/></svg></div>
    </fieldset>
    <button class="ok"></button>
    <ul class="drop">
      <li class="d0">4500_Kitchen Island_DW : 4500_Kitchen Island_DW</li><li class="d1">Sink-Offset-Kohler-Vault-3823_4 : Steel-Stainless-NA</li><li>レベル : Ceiling</li><li>レベル : Foundation</li><li class="hi">レベル : Level 1</li><li>レベル : Level 1&nbsp; Living Rm.</li><li>レベル : Level 2</li><li>レベル : Roof Line</li><li class="d8">参照面 : <b class="pk">プロファイル</b>面</li><li class="a">通芯 : 1</li><li class="a">通芯 : 2</li><li class="a">通芯 : 3</li><li class="a">通芯 : 4</li><li class="a">通芯 : 5</li><li class="a">通芯 : 6</li><li class="a">通芯 : 7</li><li class="a">通芯 : A</li><li class="a">通芯 : B</li><li class="a">通芯 : C</li><li class="a">通芯 : D</li><li class="a">通芯 : E</li><li class="a">通芯 : F</li><li class="a">通芯 : G</li>
    </ul>
  </div>
</main>

<footer class="status">
  <span class="ready">準備中</span>
  <svg class="s-work" viewBox="0 0 20 20" width="20" height="20"><path d="M2 8h5v11H2zM9 7h4v12H9zM14 9h5v9h-5zM4 5h4v3H4zM8 1h7v5H8zM15 5h4v3h-4z" fill="#999" stroke="#eee" stroke-width=".6"/></svg>
  <div class="sc c1"><svg viewBox="0 0 12 8" width="10" height="7"><path d="M1 1l5 5 5-5"/></svg></div>
  <svg class="s-edit" viewBox="0 0 20 22" width="18" height="20"><path d="M6 1h12v6h-4v2H9l-1 3h4l-3 4H6l-1 5H1l4-12z" fill="#aaa" stroke="#eee" stroke-width=".8"/></svg>
  <span class="cnt">:0</span>
  <svg class="s-a" viewBox="0 0 20 20" width="20" height="20"><path d="M0 0h20v20H0z" fill="#999"/></svg>
  <svg class="s-b" viewBox="0 0 20 20" width="20" height="20"><path d="M2 0h18v20H2z" fill="#999"/><path d="M0 13h8v-3l5 5-5 5v-3H0z" fill="#bbb" stroke="#eee"/></svg>
  <div class="sc c2"><span><b class="k">メイン</b> <b class="k">モデル</b></span><svg viewBox="0 0 12 8" width="10" height="7"><path d="M1 1l5 5 5-5"/></svg></div>
  <div class="picks">
    <svg viewBox="0 0 20 20"><path d="M1 3q4-4 9 0 5-4 9 0 2 5-5 7l3 9h-5l-4-9Q-1 9 1 3z"/><path d="M5 5h3M12 5h4" stroke="#ddd"/></svg>
    <svg viewBox="0 0 20 20"><path d="M0 14L10 3l9-2v6l-3 2 3 3-3 3 3 4h-7l-3-4z"/></svg>
    <svg viewBox="0 0 20 20"><path d="M1 1h11v7l7 7-3 4-4-4-4 1-8-1V9h2z"/></svg>
    <svg viewBox="0 0 20 20"><path d="M1 1h11l7 0-3 5 3 4-4 2 4 7h-6l-3-4-9 3z"/></svg>
    <svg viewBox="0 0 20 20"><path d="M6 0v12M0 6h12M4 2l2-2 2 2M4 10l2 2 2-2M12 8v10l3-3 2 4 2-1-2-4h3z" fill="#ddd" stroke="#999" stroke-width="1.200"/></svg>
    <svg viewBox="0 0 20 20"><circle cx="10" cy="10" r="6.500" fill="none" stroke="#a4a4a4" stroke-width="4" stroke-dasharray="4 1.100"/></svg>
    <svg viewBox="0 0 20 20"><path d="M0 1h20v3l-8 8v7H8v-7L0 4z" fill="url(#fn)" stroke="#444b58"/></svg>
    <span>:0</span>
  </div>
</footer>
</div>
</body>
</html>
```
FILE: styles.css
```
* { box-sizing: border-box; }
body {
  margin: 0;
  font: 14.5px/20px "Open Sans", "Noto Sans CJK JP", sans-serif;
  font-feature-settings: "palt";
  color: #222;
}
ul { list-style: none; margin: 0; padding: 0; }
p { margin: 0; }
.defs { position: absolute; width: 0; height: 0; }
.app { width: 1920px; height: 1030px; display: flex; flex-direction: column; background: #eee; overflow: hidden; }

/* compact kana */
.k { font-weight: inherit; font-size: .92em; letter-spacing: -1.2px; }

/* small down arrow */
.dd { width: 0; height: 0; border: 3.5px solid transparent; border-top: 4px solid #444; border-bottom: 0; }
.vl { width: 1px; height: 28px; background: #b8b8b8; }

/* title bar */
.titlebar { height: 37px; flex: none; background: #ccc; display: flex; color: #333; white-space: nowrap; }
.qat {
  width: 829px; height: 31px; padding-left: 17px; align-items: center; display: grid;
  grid-template-columns: 29px 34.5px 30.5px 30px 23px 22px 22px 23.5px 21.5px 23px 20px 18px 24px 21.5px 30.500px 29.5px 21.5px 17px 24px 21px 31px 27px 16px 24px 20px 19px 20px;
}
.qat > * { justify-self: start; transform: translateX(-50%); }
.g { fill: none; stroke: #888; stroke-width: 1.3; color: #888; }
.thin { width: 30px; height: 27px; border: 1px solid #1268c4; background: #c4dcf4; display: grid; place-items: center; margin-bottom: 1px; }
.apptitle { width: 634px; line-height: 25px; letter-spacing: -.05px; color: #333; }
.info { display: grid; grid-template-columns: 24px 30px 40px 86px 26px 22px 22px 23px 90px 32px 31px 14px; height: 31px; padding-left: 15px; align-items: center; }
.info > * { justify-self: start; transform: translateX(-50%); }
.user { letter-spacing: -.13px; margin-top: 2px; }

/* tabs */
.tabs { height: 25px; flex: none; background: #ccc; display: flex; align-items: center; line-height: 25px; color: #222; white-space: nowrap; }
.tabs span { width: 54px; height: 25px; text-align: center; }
.tabs .t-file { width: 64px; margin: 0 3px 0 1px; background: #2a7ab4; color: #fff; }
.tabs .t-on { width: 52px; background: #f2f2f2; margin-right: 1px; }
.tabs .t-mass { width: 96px; }
.tabs .t-col { width: 88px; }
.tabs .t-add { width: 69px; }
.tabs .t-site { width: 114px; }
.tabs .t-bim { width: 193px; letter-spacing: -.16px; }
.tabs .t-mod { width: 128px; margin: 0 1px; background: #e8f1dc; }
.tabs .t-pre { width: 72px; letter-spacing: -.4px; }
.tabs svg { margin: 0 5px 0 26px; }

/* ribbon */
.ribbon { height: 121px; flex: none; display: flex; border-left: 1px solid #ccc; border-bottom: 1px solid #ccc; background: #eee; }
.panel { border-right: 1px solid #dcdcdc; display: flex; flex-direction: column; height: 119px; }
.tools { display: grid; height: 96px; color: #a6a6a6; justify-content: start; }
.tool { display: flex; flex-direction: column; align-items: center; padding-top: 6px; position: relative; left: -1px; text-align: center; white-space: nowrap; }
.tool svg { width: 38px; height: 40px; flex: none; fill: url(#lg); stroke: #b4b4b4; stroke-width: 1.4; stroke-linejoin: round; }
.tool span { margin-top: 6px; font-weight: 300; line-height: 20px; }
.tool .dd { border-top-color: #666; margin-top: 4px; }
.tool .side { position: absolute; right: 3px; top: 72px; margin: 0; }
.p-model .tool .side { right: 1px; top: 69px; }
.p-room .tool:last-child .side { right: 0; }
.tool.on { left: 0; margin: 4px 0 3px 3px; padding-top: 2px; background: linear-gradient(#c8def4, #bcd8f2); border: 1px solid #3c88d0; }
.tool.on svg { stroke: #93a7ba; }
.plabel { height: 23px; line-height: 25px; text-align: center; color: #222; }
.pd { display: inline-block; border: 5px solid transparent; border-top-color: #333; border-bottom: 0; margin: 0 0 2px 4px; }
.p-sel { width: 62px; } .p-sel .tools { grid-template-columns: 62px; }
.p-build { width: 618px; } .p-build .tools { grid-template-columns: 52px 44px 53px 99px 55px 52px 54px 42px 64px 42px 62px; }
.p-stair { width: 163px; } .p-stair .tools { grid-template-columns: 65px 42px 56px; }
.p-model { width: 171px; } .p-model .tools { grid-template-columns: 55px 40px 72px; }
.p-room { width: 328px; } .p-room .tools { grid-template-columns: 54px 42px 63px 54px 50px 58px; }
.p-open { width: 249px; } .p-open .tools { grid-template-columns: 52px 46px 53px 44px 53px; }
.p-datum { width: 104px; } .p-datum .tools { grid-template-columns: 55px 42px; }
.p-work { flex: 1; border: 0; } .p-work .tools { grid-template-columns: 49px 49px 49px 47px; }
.p-work .plabel { width: 202px; }

.options { height: 33px; flex: none; padding: 6px 0 0 12px; line-height: 22px; color: #111; }

/* workspace */
.work { height: 782px; flex: none; display: flex; position: relative; border-top: 2px solid #ccc; }
.browser { width: 424px; border-right: 2px solid #ccc; flex: none; display: flex; flex-direction: column; }
.bhead { height: 24px; line-height: 25px; padding-left: 4px; color: #444; white-space: nowrap; }
.bbody { height: 726px; margin: 0 3px 0 2px; background: #fff; padding-top: 1px; }
.btabs { height: 30px; padding-top: 3px; display: flex; line-height: 26px; color: #bbb; white-space: nowrap; }
.b-on { width: 337px; padding-left: 7px; }
.b-off { width: 85px; padding-left: 8px; background: #ccc; color: #a8a8a8; }
.tree { margin-left: -2px; color: #111; }
.tree ul { margin-left: 26px; }
.tree li { position: relative; }
.tree li::before { content: ""; position: absolute; left: 12px; top: 0; bottom: 0; border-left: 1px dotted #a0a0a0; }
.tree li:last-child::before { bottom: auto; height: 11px; }
.tree > li:first-child::before { top: 11px; }
.row { position: relative; height: 22px; line-height: 22px; display: flex; align-items: center; padding-left: 34px; white-space: nowrap; }
.row::before { content: ""; position: absolute; left: 13px; top: 11px; width: 19px; border-top: 1px dotted #a0a0a0; }
.row.ic { padding-left: 28px; }
.row.ic::before { width: 15px; }
.row svg { width: 19px; height: 19px; margin-right: 7px; }
.wide { letter-spacing: .17px; }
.dk { color: #5c6068; }
.tw { position: absolute; left: 6px; top: 5px; width: 13px; height: 13px; border: 1px solid #8e8e8e; border-radius: 1px; z-index: 1;
  background: linear-gradient(#3a5ba8, #3a5ba8) 50% 50% / 9px 1px no-repeat, linear-gradient(#fff, #e0e0e0); }
.tw.plus { background: linear-gradient(#3a5ba8, #3a5ba8) 50% 50% / 9px 1px no-repeat, linear-gradient(#3a5ba8, #3a5ba8) 50% 50% / 1px 9px no-repeat, linear-gradient(#fff, #e0e0e0); }
.sel { background: #e2e2e2; font-weight: 600; margin-left: -3px; padding: 0 3px; letter-spacing: -.35px; }

.view { flex: 1; display: flex; flex-direction: column; background: #fff; min-width: 0; }
.vtabs { height: 25px; background: #ccc; display: flex; align-items: center; color: #a4a4a4; }
.vt { height: 25px; display: flex; align-items: center; gap: 9px; padding-left: 6px; }
.v1 { width: 182px; } .v2 { width: 160px; }
.v3 { width: 160px; background: #fff; color: #bbb; letter-spacing: -.26px; }
.vx { margin-left: auto; margin-right: 7px; }
.vmenu { margin: 0 5px 0 auto; }
.md { color: #8a8a8a; }
.vmid { height: 732px; display: flex; }
.canvas { width: 1475px; position: relative; overflow: hidden; }
.plan { display: block; }
.ln { fill: none; stroke: #000; stroke-width: 1; }
.dash { stroke-dasharray: 26 7 5 7; }
.plan text { font-family: "Liberation Sans", sans-serif; text-anchor: middle; }
.bub { font-size: 16px; }
.plan .note text { font-size: 10.3px; text-anchor: start; }
.sm { font-size: 10px; }
.xs { font-size: 7.5px; }
.xs .dim { font-size: 7px; font-weight: bold; }
.blue { font-size: 7px; font-weight: bold; fill: #0f3cc0; }
.callout { position: absolute; left: 235px; top: 37px; font: bold 32px/40px "Liberation Sans", sans-serif; letter-spacing: .2px; color: #fa0a0a; text-shadow: 2px 3px 4px rgba(0,0,0,.5); white-space: nowrap; }
.navbar { position: absolute; left: 1438px; top: 2px; width: 36px; height: 118px; border: 2px solid #bbb; border-radius: 5px; background: #f4f4f4; }
.navbar svg { margin: -2px; }
.vscroll { width: 20px; background: #f0f0f0; border-left: 0; display: flex; flex-direction: column; align-items: center; margin-top: 2px; padding: 6px 0 7px; }
.vscroll i { width: 18px; height: 20px; background: #cdcdcd; margin: 341px 0 auto; }
.chev { fill: none; stroke: #555; stroke-width: 2; }
.vbar { height: 21px; background: #f0f0f0; border-bottom: 1px solid #ccc; margin-bottom: 2px; display: flex; align-items: center; }
.vbar svg { width: 20px; height: 18px; margin-right: 7.8px; flex: none; }
.vbar .scale { width: 76px; margin-left: 33px; font: 14px "Liberation Sans", sans-serif; letter-spacing: .5px; color: #111; }
.vbar .hleft { margin-left: -3px; margin-right: 10.8px; }
.hthumb { width: 21px; height: 18px; background: #cdcdcd; margin-left: 490px; }
.vbar .hright { width: 8px; height: 10px; margin: 0 0 0 505px; }
.vbar .grip { width: 11px; height: 11px; margin: 5px 0 0 auto; margin-right: 4px; }

/* work plane dialog */
.dialog { position: absolute; left: 700px; top: 114px; width: 520px; height: 358px; border: 1px solid #666; background: #f0f0f0; box-shadow: 2px 5px 18px rgba(0,0,0,.4); font: 14px/17px "Liberation Sans", "Noto Sans CJK JP", sans-serif; color: #000; }
.dtitle { height: 37px; background: #fff; display: flex; align-items: center; justify-content: space-between; padding: 0 14px 0 9px; letter-spacing: .3px; }
fieldset { margin: 0 0 0 14px; padding: 0; border: 1px solid #dcdcdc; }
legend { margin-left: 7px; padding: 0 2px; line-height: 20px; }
.f1 { width: 482px; height: 99px; margin-top: 9px; padding-left: 12px; }
.f1 legend { letter-spacing: .33px; margin-left: -6px; }
.f1 p { line-height: 17px; }
.f1 p:first-of-type { margin-top: 1px; }
.lv { letter-spacing: -.35px; margin-left: -2px; }
.btns { display: flex; gap: 10px; margin: 8px 0 0 102px; }
button { width: 118px; height: 26px; padding: 0; border: 1px solid #adadad; background: #e1e1e1; font: inherit; color: #000; letter-spacing: .4px; }
button:disabled { background: #ccc; border-color: #bfbfbf; color: #888; }
.f2 { width: 490px; height: 151px; margin-top: 7px; display: flex; }
.f2 legend { margin-left: 6px; }
.rads { width: 156px; padding: 9px 0 0 15px; overflow: hidden; }
.rads label { display: flex; align-items: center; height: 20px; margin-bottom: 12px; white-space: nowrap; letter-spacing: .3px; }
.rads .third { margin-top: -2px; letter-spacing: -1px; }
.rad { width: 16px; height: 16px; border: 1px solid #333; border-radius: 50%; background: #fff; margin-right: 5px; flex: none; }
.rad.on { background: radial-gradient(circle, #222 0 4.5px, #fff 5.5px); }
.combo { width: 320px; height: 24px; margin-top: 8px; margin-left: -1px; border: 1px solid #0a5fa8; background: #cce4f7; display: flex; align-items: center; justify-content: space-between; padding: 0 5px 0 3px; letter-spacing: -.4px; }
.ok { display: block; margin: 13px 0 0 129px; border: 2px solid #0078d7; }
.drop { position: absolute; left: 170px; top: 203px; width: 386px; height: 348px; border: 1px solid #0078d7; background: #fff; box-shadow: 3px 3px 4px rgba(0,0,0,.35); padding-top: 1px; }
.drop li { height: 15px; line-height: 15px; padding-left: 1px; letter-spacing: -.4px; white-space: pre; }
.drop .d0 { letter-spacing: -.16px; }
.drop .d1 { letter-spacing: .52px; }
.drop .d8 { letter-spacing: 0; }
.pk { font-weight: inherit; letter-spacing: -1.6px; }
.drop .a { letter-spacing: .15px; }
.drop .hi { background: #0078d7; color: #fff; }

/* status bar */
.status { height: 32px; padding-top: 1px; background: #ccc; display: flex; align-items: center; color: #111; }
.ready { width: 681px; padding-left: 3px; }
.s-work { margin-left: 4px; }
.sc { height: 22px; background: #fff; border: 1px solid #d8d8d8; display: flex; align-items: center; justify-content: space-between; padding: 0 4px; color: #888; }
.sc svg { margin-left: auto; fill: none; stroke: #999; stroke-width: 1.4; }
.c1 { width: 254px; margin-left: 8px; }
.s-edit { margin-left: 9px; }
.cnt { margin-left: 7px; width: 36px; font-family: "Liberation Sans"; font-size: 14px; }
.s-a { margin-left: 8px; }
.s-b { margin-left: 9px; }
.c2 { width: 255px; margin-left: 8px; }
.picks { margin-left: 263px; display: flex; align-items: center; }
.picks svg { width: 20px; height: 20px; margin-right: 10px; fill: #999; }
.picks svg:nth-last-child(2) { margin-right: 1px; margin-left: -1px; }
```
